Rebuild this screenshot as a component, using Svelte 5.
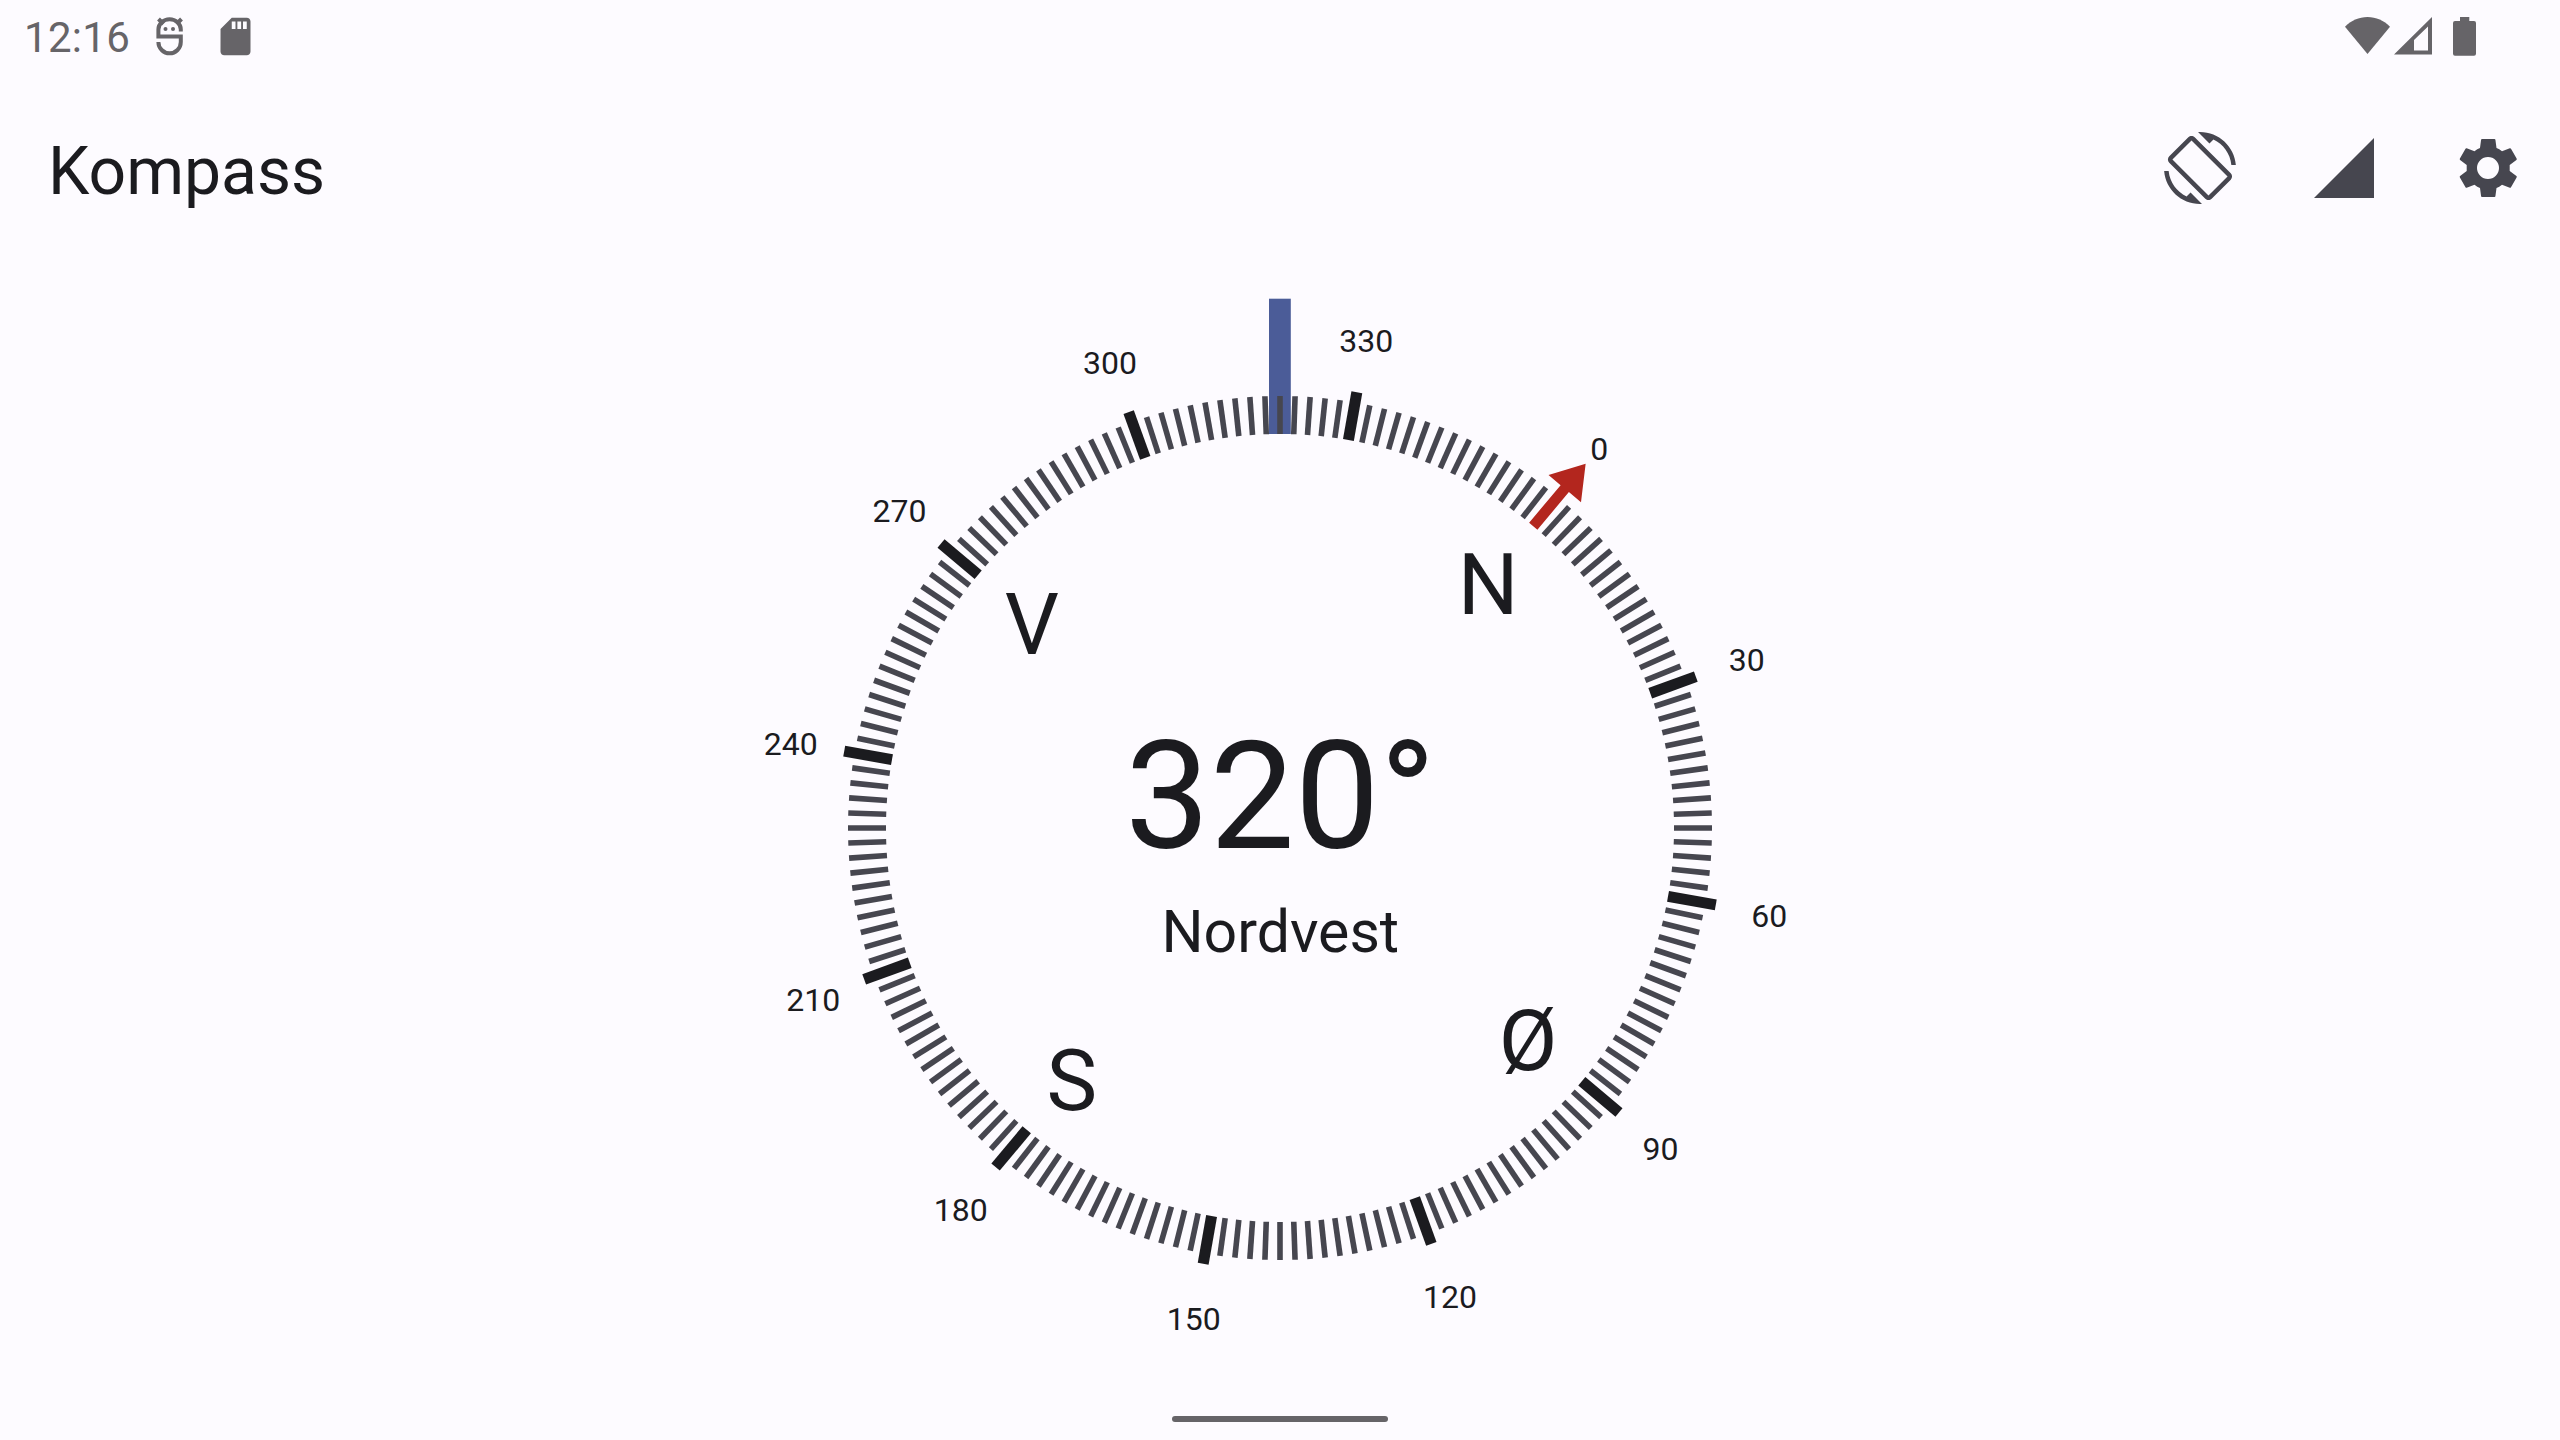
<script>
  const heading = 320;
  const rad = (deg) => (deg * Math.PI) / 180;
  const polar = (deg, r) => ({ x: r * Math.sin(rad(deg - heading)), y: -r * Math.cos(rad(deg - heading)) });

  const ticks = Array.from({ length: 180 }, (_, i) => i * 2).filter((d) => d !== 0);
  const labels = Array.from({ length: 12 }, (_, i) => ({ text: i * 30, ...polar(i * 30, 496.8) }));
  const cardinals = ['N', 'Ø', 'S', 'V'].map((text, i) => ({ text, ...polar(i * 90, 324) }));
</script>

<div class="screen">
  <header class="status">
    <div class="group">
      <span class="clock">12:16</span>
      <svg class="droid" width="28" height="40" viewBox="0 0 28 40">
        <path d="M2.500 2l5 5M25.500 2l-5 5" />
        <path d="M24.800 14.500V12.500A11 10 0 0 0 2.400 12.500v7h22.400V25a11.200 11.300 0 0 1-22.400 0" />
        <circle cx="9.500" cy="12" r="2" />
        <circle cx="17" cy="12" r="2" />
      </svg>
      <svg class="sd" width="45" height="45" viewBox="0 0 24 24">
        <path d="M18 2h-8L4.020 8 4 20c0 1.100.900 2 2 2h12c1.100 0 2-.900 2-2V4c0-1.100-.900-2-2-2zm-6 6h-2V4h2v4zm3 0h-2V4h2v4zm3 0h-2V4h2v4z" />
      </svg>
    </div>
    <div class="group">
      <svg width="45" height="38" viewBox="0 0 45 38"><path d="M22.500 37L0 9.700C6 3.500 14 0 22.500 0S39 3.500 45 9.700z" /></svg>
      <svg class="cell" width="38" height="38" viewBox="0 0 38 38"><path fill-rule="evenodd" d="M38 0v37.500H0zM34 9.500L20 23v10.500h14z" /></svg>
      <svg class="battery" width="23" height="39" viewBox="0 0 23 39"><path d="M7 0h9.300v4H21q2 0 2 2v30.700q0 2-2 2H2q-2 0-2-2V6q0-2 2-2h5z" /></svg>
    </div>
  </header>

  <div class="appbar">
    <h1>Kompass</h1>
    <nav>
      <svg width="72" height="72" viewBox="0 0 24 24">
        <path d="M16.480 2.520c3.270 1.550 5.610 4.720 5.970 8.480h1.500C23.440 4.840 18.290 0 12 0l-.66.030 3.810 3.810 1.330-1.320zm-6.250-.77c-.59-.59-1.540-.59-2.120 0L1.750 8.110c-.59.59-.59 1.540 0 2.120l12.020 12.020c.59.59 1.540.59 2.120 0l6.360-6.360c.59-.59.59-1.540 0-2.120L10.230 1.750zm4.600 19.440L2.810 9.170l6.360-6.360 12.020 12.020-6.360 6.360zm-7.310.29C4.250 19.940 1.910 16.760 1.550 13H.05C.56 19.160 5.710 24 12 24l.66-.03-3.810-3.810-1.330 1.320z" />
      </svg>
      <svg width="72" height="72" viewBox="0 0 24 24"><path d="M2 22h20V2z" /></svg>
      <svg width="72" height="72" viewBox="0 0 72 72">
        <path fill-rule="evenodd" d="M30 7h12.500q.8 0 .9.800l1.100 8.200q2.800 1 5.500 3.200l7.800-3q.8-.2 1.200.5l5.600 9.800q.5.900-.2 1.400L57.700 33v6l6.700 5.100q.7.500.2 1.400L59 55.300q-.4.700-1.200.5L50 52.800q-2.700 2.200-5.500 3.200l-1.100 8.200q-.1.800-.9.800H30q-.8 0-.9-.8L28 56q-2.800-1-5.500-3.200l-7.800 3q-.8.200-1.200-.5L7.900 45.500q-.5-.9.200-1.400L14.700 39v-6L8.100 27.900q-.7-.5-.2-1.400l5.600-9.800q.4-.7 1.200-.5l7.800 3Q25.200 17 28 16l1.100-8.200q.1-.8.900-.8zM36 25a11 11 0 1 0 0 22 11 11 0 0 0 0-22z" />
      </svg>
    </nav>
  </div>

  <main>
    <svg width="1120" height="1120" viewBox="-560 -560 1120 1120">
      <rect class="marker" x="-11" y="-529.300" width="21.800" height="135.300" />
      {#each ticks as d}
        {#if d % 30 === 0}
          <line class="major" y1="-394" y2="-442.500" transform="rotate({d - heading})" />
        {:else}
          <line class="minor" y1="-394" y2="-432" transform="rotate({d - heading})" />
        {/if}
      {/each}
      <path class="north" d="M-5.400-394V-443H-21.200L0-475.500 21.200-443H5.400V-394z" transform="rotate({-heading})" />
      {#each labels as l}
        <text class="degree" x={l.x} y={l.y + 12.9}>{l.text}</text>
      {/each}
      {#each cardinals as c}
        <text class="cardinal" x={c.x} y={c.y + 33.9}>{c.text}</text>
      {/each}
      <text class="heading" x="0.500" y="20.300">{heading}°</text>
      <text class="direction" x="0.300" y="124">Nordvest</text>
    </svg>
  </main>

  <footer><span></span></footer>
</div>

<style>
  :global(body) {
    background: #fdfbff;
  }
  .screen {
    display: flex;
    flex-direction: column;
    width: 2560px;
    height: 1440px;
    overflow: hidden;
    background: #fdfbff;
    color: #1b1b1f;
    fill: currentColor;
    font-family: Roboto, sans-serif;
  }
  svg {
    display: block;
    flex: none;
  }
  .status {
    display: flex;
    justify-content: space-between;
    height: 72px;
    padding: 0 84px 0 24px;
    color: #666468;
    box-sizing: border-box;
  }
  .group {
    display: flex;
    align-items: flex-start;
    padding-top: 16.500px;
  }
  .clock {
    width: 132px;
    font-size: 42px;
    line-height: 42px;
    letter-spacing: 0.300px;
  }
  .droid {
    fill: none;
    stroke: currentColor;
    stroke-width: 4;
  }
  .droid circle {
    fill: currentColor;
    stroke: none;
  }
  .sd {
    margin: -3px 0 0 28.500px;
  }
  .cell {
    margin-left: 4px;
  }
  .battery {
    margin-left: 21px;
  }
  .appbar {
    display: flex;
    align-items: center;
    justify-content: space-between;
    height: 192px;
    padding: 0 36px 0 48px;
    box-sizing: border-box;
  }
  h1 {
    margin: 6px 0 0;
    font-size: 66px;
    font-weight: 400;
  }
  nav {
    display: flex;
    gap: 72px;
    color: #46464f;
  }
  main {
    display: flex;
    justify-content: center;
    height: 1128px;
    padding-top: 4px;
    box-sizing: border-box;
  }
  .marker {
    fill: #4b5c98;
  }
  .minor {
    stroke: #46464f;
    stroke-width: 5.600;
  }
  .major {
    stroke: #1b1b1f;
    stroke-width: 11;
  }
  .north {
    fill: #b3261e;
  }
  text {
    text-anchor: middle;
  }
  .degree {
    font-size: 32px;
  }
  .cardinal {
    font-size: 85.300px;
  }
  .heading {
    font-size: 151px;
  }
  .direction {
    font-size: 59px;
  }
  footer {
    display: flex;
    justify-content: center;
    padding-top: 24px;
  }
  footer span {
    width: 216px;
    height: 6px;
    border-radius: 3px;
    background: #666468;
  }
</style>
